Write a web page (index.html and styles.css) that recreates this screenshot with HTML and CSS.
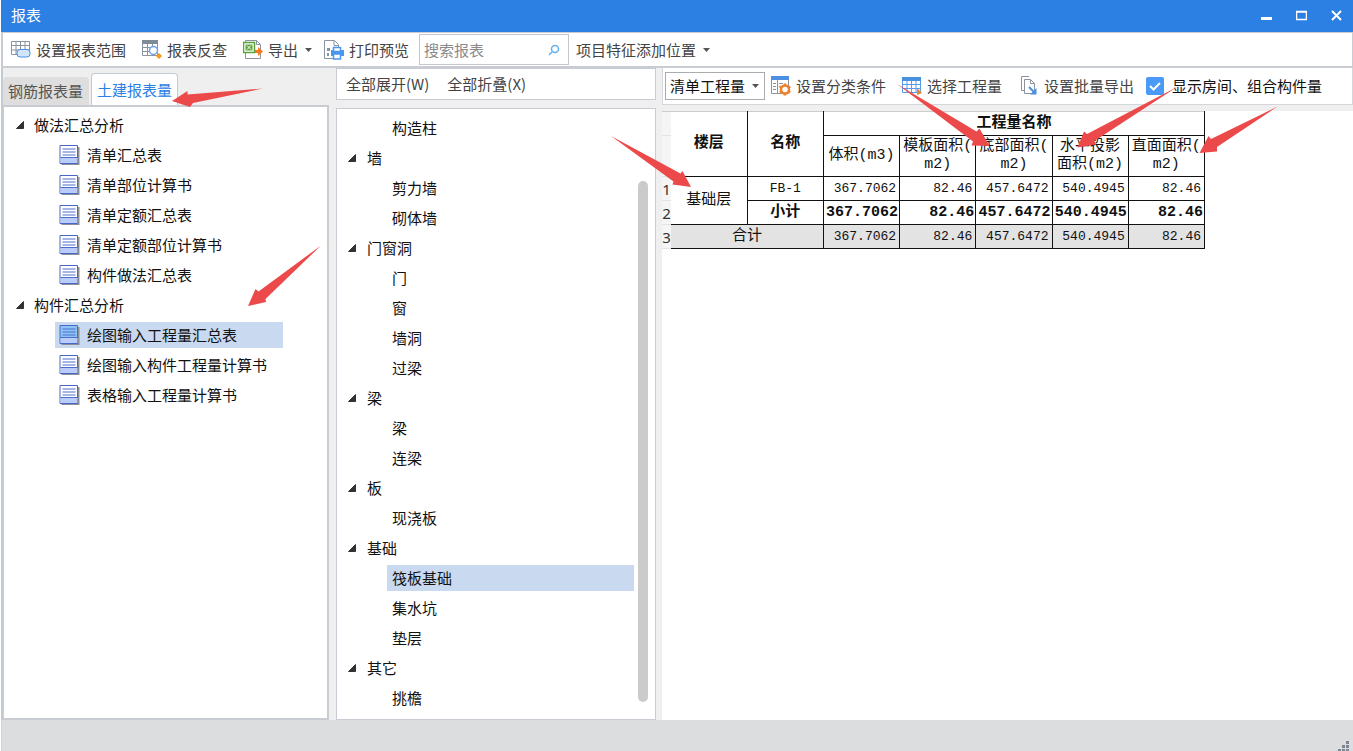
FILE: index.html
```html
<!DOCTYPE html>
<html lang="zh-CN">
<head>
<meta charset="utf-8">
<title>报表</title>
<link rel="stylesheet" href="styles.css">
</head>
<body>
<svg class="defs" aria-hidden="true">
  <symbol id="doc" viewBox="0 0 20 20">
    <path d="M2 2h18v18H2z" fill="#8a8f98"/>
    <path class="doc-page" d="M.5.5h17.500v18H.5z" stroke="#4768c8"/>
    <path class="doc-foot" d="M1 13h17v5H1z"/>
    <path d="M1 12.500h17M3 4h13M3 7h13M3 10h13" stroke="#4c6fce" fill="none"/>
  </symbol>
  <symbol id="tri" viewBox="0 0 8 8"><path d="M7.500 .5v7H.5z" fill="#333" stroke="#333"/></symbol>
  <symbol id="caret" viewBox="0 0 7 4"><path d="M0 0h7L3.500 4z" fill="#555"/></symbol>
</svg>
<div class="window">
  <header class="titlebar">
    <h1>报表</h1>
    <div class="winbtns">
      <button type="button" aria-label="最小化"><svg width="11" height="11"><path d="M0 8.500h11" stroke="#fff" stroke-width="3"/></svg></button>
      <button type="button" aria-label="最大化"><svg width="11" height="11"><path d="M.5 1.500h10v8H.5zM0 2h11" stroke="#fff" fill="none" stroke-width="1.500"/></svg></button>
      <button type="button" aria-label="关闭"><svg width="11" height="11"><path d="M1 1l9 9M10 1l-9 9" stroke="#fff" stroke-width="2"/></svg></button>
    </div>
  </header>

  <div class="toolbar">
    <button type="button" class="tool"><svg width="20" height="20" viewBox="0 0 20 20" fill="none"><path d="M.5 1.500h18v13H.5zM.5 5.500h18M.5 10h18M5 1v14M9.500 1v14M14 1v14" stroke="#8b949e"/><rect x="6" y="9.500" width="13" height="7.500" rx="3" fill="#cfe6fd" stroke="#4a90e2"/></svg>设置报表范围</button>
    <button type="button" class="tool"><svg width="20" height="20" viewBox="0 0 20 20" fill="none"><path d="M.5.5h15v15H.5zM.5 7.500h15M.5 11.500h15M5.500 3v12M10.500 3v12" stroke="#8b949e"/><path d="M0 0h16v4H0z" fill="#7f8a96"/><circle cx="11.500" cy="10.500" r="4" fill="#fff" stroke="#6fa0ee" stroke-width="1.500"/><path d="M17 13l3 3-3 3-3-3z" fill="#f59a1c"/></svg>报表反查</button>
    <button type="button" class="tool"><svg width="20" height="20" viewBox="0 0 20 20" fill="none"><path d="M2.500.5h11l4 4v14h-15zM13.500.5v4h4" fill="#fff" stroke="#8b949e"/><path d="M.5 2.500h11v10H.5z" fill="#fff" stroke="#5aa33a" stroke-width="1.500"/><path d="M2.500 4.500h7v6h-7z" fill="#5aa33a"/><path d="M4 5.500l4 4M8 5.500l-4 4" stroke="#fff"/><path d="M12 10h3V7l5 4.500-5 4.500v-3h-3z" fill="#f47a20"/></svg>导出<svg class="caret"><use href="#caret"/></svg></button>
    <button type="button" class="tool"><svg width="20" height="20" viewBox="0 0 20 20" fill="none"><path d="M.5.5h10l4 4v14H.5zM10 .5v5h5" fill="#fff" stroke="#8b949e"/><path d="M3 8h3v3H3zM3 13h2v3H3z" fill="#8b949e"/><path d="M7 10h13v6H7z" fill="#4a97ee"/><path d="M9.500 7.500h7v4h-7zM9.500 14h7v5h-7z" fill="#fff" stroke="#4a97ee" stroke-width="1.500"/></svg>打印预览</button>
    <label class="search">
      <input type="text" placeholder="搜索报表" aria-label="搜索报表">
      <svg width="12" height="12" viewBox="0 0 12 12" fill="none"><circle cx="7" cy="5" r="3.500" stroke="#62b0ee" stroke-width="1.500"/><path d="M4 8l-3 3" stroke="#62b0ee" stroke-width="1.500"/></svg>
    </label>
    <button type="button" class="tool">项目特征添加位置<svg class="caret"><use href="#caret"/></svg></button>
  </div>

  <main class="content">
    <section class="left">
      <div class="tabs" role="tablist">
        <button type="button" role="tab" class="tab">钢筋报表量</button>
        <button type="button" role="tab" class="tab active" aria-selected="true">土建报表量</button>
      </div>
      <div class="panel reports">
        <ul class="tree">
          <li class="group"><svg class="tri"><use href="#tri"/></svg>做法汇总分析</li>
          <li><button type="button" class="node"><svg class="doc"><use href="#doc"/></svg>清单汇总表</button></li>
          <li><button type="button" class="node"><svg class="doc"><use href="#doc"/></svg>清单部位计算书</button></li>
          <li><button type="button" class="node"><svg class="doc"><use href="#doc"/></svg>清单定额汇总表</button></li>
          <li><button type="button" class="node"><svg class="doc"><use href="#doc"/></svg>清单定额部位计算书</button></li>
          <li><button type="button" class="node"><svg class="doc"><use href="#doc"/></svg>构件做法汇总表</button></li>
          <li class="group"><svg class="tri"><use href="#tri"/></svg>构件汇总分析</li>
          <li><button type="button" class="node selected"><svg class="doc"><use href="#doc"/></svg>绘图输入工程量汇总表</button></li>
          <li><button type="button" class="node"><svg class="doc"><use href="#doc"/></svg>绘图输入构件工程量计算书</button></li>
          <li><button type="button" class="node"><svg class="doc"><use href="#doc"/></svg>表格输入工程量计算书</button></li>
        </ul>
      </div>
    </section>

    <section class="middle">
      <div class="panel actions">
        <button type="button">全部展开(W)</button>
        <button type="button">全部折叠(X)</button>
      </div>
      <div class="panel parts">
        <ul class="tree">
          <li><button type="button" class="node">构造柱</button></li>
          <li class="group"><svg class="tri"><use href="#tri"/></svg>墙</li>
          <li><button type="button" class="node">剪力墙</button></li>
          <li><button type="button" class="node">砌体墙</button></li>
          <li class="group"><svg class="tri"><use href="#tri"/></svg>门窗洞</li>
          <li><button type="button" class="node">门</button></li>
          <li><button type="button" class="node">窗</button></li>
          <li><button type="button" class="node">墙洞</button></li>
          <li><button type="button" class="node">过梁</button></li>
          <li class="group"><svg class="tri"><use href="#tri"/></svg>梁</li>
          <li><button type="button" class="node">梁</button></li>
          <li><button type="button" class="node">连梁</button></li>
          <li class="group"><svg class="tri"><use href="#tri"/></svg>板</li>
          <li><button type="button" class="node">现浇板</button></li>
          <li class="group"><svg class="tri"><use href="#tri"/></svg>基础</li>
          <li><button type="button" class="node selected">筏板基础</button></li>
          <li><button type="button" class="node">集水坑</button></li>
          <li><button type="button" class="node">垫层</button></li>
          <li class="group"><svg class="tri"><use href="#tri"/></svg>其它</li>
          <li><button type="button" class="node">挑檐</button></li>
        </ul>
        <div class="scroll"></div>
      </div>
    </section>

    <section class="right">
      <div class="options">
        <div class="select">
          <select aria-label="工程量类型"><option>清单工程量</option></select>
          <svg class="caret"><use href="#caret"/></svg>
        </div>
        <button type="button" class="tool"><svg width="20" height="20" viewBox="0 0 20 20" fill="none"><path d="M.5.5h17v17H.5z" fill="#fff" stroke="#8b949e"/><path d="M0 0h18v4H0z" fill="#4a8fe0"/><path d="M6.500 4v13M2 7.500h3M2 10.500h3M2 13.500h3M8 7.500h4M8 10.500h3" stroke="#8b949e"/><circle cx="14" cy="13.500" r="4" fill="#fff" stroke="#f0812b" stroke-width="2.500"/><path d="M14 7.500v2M14 17.500v2M8.800 10.500l1.700 1M17.500 15.500l1.700 1M8.800 16.500l1.700-1M17.500 11.500l1.700-1" stroke="#f0812b" stroke-width="2.500"/></svg>设置分类条件</button>
        <button type="button" class="tool"><svg width="20" height="20" viewBox="0 0 20 20" fill="none"><path d="M.5 1.500h18v15H.5zM.5 8.500h18M.5 12.500h18M5 5v12M9.500 5v12M14 5v12" stroke="#5c9be8"/><path d="M0 1h19v4H0z" fill="#4a8fe0"/><path d="M15 12l5 5-5 2z" fill="#f0812b"/></svg>选择工程量</button>
        <button type="button" class="tool"><svg width="20" height="20" viewBox="0 0 20 20" fill="none"><path d="M10 .5H2.500v14H5" stroke="#8b949e"/><path d="M5.500 3.500h6l4 4v10h-10zM11.500 3.500v4h4" fill="#fff" stroke="#8b949e"/><path d="M10 11l5 5" stroke="#4a8fe0" stroke-width="2"/><path d="M17.500 12v6.500H11z" fill="#4a8fe0"/></svg>设置批量导出</button>
        <label class="check"><input type="checkbox" checked><span class="box"><svg width="18" height="18" viewBox="0 0 18 18" fill="none"><path d="M4 9l3.500 3.500L14 6" stroke="#fff" stroke-width="2"/></svg></span>显示房间、组合构件量</label>
      </div>
      <div class="sheet">
        <table>
          <colgroup><col class="c-num"><col><col><col><col><col><col><col></colgroup>
          <tbody>
            <tr class="r-top"><td class="num"></td><th rowspan="2" class="edge">楼层</th><th rowspan="2">名称</th><th colspan="5">工程量名称</th></tr>
            <tr class="r-head"><td class="num"></td><td>体积(m3)</td><td>模板面积(<br>m2)</td><td>底部面积(<br>m2)</td><td>水平投影<br>面积(m2)</td><td>直面面积(<br>m2)</td></tr>
            <tr><td class="num">1</td><td rowspan="2" class="edge">基础层</td><td class="name">FB-1</td><td class="v">367.7062</td><td class="v">82.46</td><td class="v">457.6472</td><td class="v">540.4945</td><td class="v">82.46</td></tr>
            <tr class="sub"><td class="num">2</td><td>小计</td><td class="v">367.7062</td><td class="v">82.46</td><td class="v">457.6472</td><td class="v">540.4945</td><td class="v">82.46</td></tr>
            <tr class="total"><td class="num">3</td><td colspan="2" class="edge">合计</td><td class="v">367.7062</td><td class="v">82.46</td><td class="v">457.6472</td><td class="v">540.4945</td><td class="v">82.46</td></tr>
          </tbody>
        </table>
      </div>
    </section>
  </main>

  <footer class="status"><svg width="12" height="10"><path d="M8 0h3v3H8zM4 4h3v3H4zM8 4h3v3H8zM0 8h3v2H0zM4 8h3v2H4zM8 8h3v2H8z" fill="#7d8791"/></svg></footer>
</div>

<svg class="arrows" width="1353" height="320" aria-hidden="true">
  <path d="M172 101l15.500-10v3.500L263 88.500 193 103l-3 4z"/>
  <path d="M248 306l7.500-17 3 2.500L321 245.500 265.500 299l.5 3z"/>
  <path d="M691 187l-8.500-16-2 2.500L611 136l62.500 45.500-1 3z"/>
  <path d="M989.500 146l-10-17.500-3 3L897 84l76 57.500-1.500 4z"/>
  <path d="M1077.500 147.500l6.500-16 3 2.500 90-47-82.500 54 1.500 3.500z"/>
  <path d="M1199.500 153l9-17 2.500 3 66.500-32.500L1217 147v4.500z"/>
</svg>
</body>
</html>
```
FILE: styles.css
```css
* { box-sizing: border-box; }

body {
  margin: 0;
  background: #fff;
  color: #111;
  font: 15px/20px "Noto Sans CJK SC", "Noto Sans", sans-serif;
}

button, input, select {
  font: inherit;
  color: inherit;
  margin: 0;
  padding: 0;
  border: 0;
  background: none;
}

svg { flex: none; }
.defs { display: none; }
.caret { width: 7px; height: 4px; }
.tri { width: 8px; height: 8px; }

.window {
  display: flex;
  flex-direction: column;
  min-height: 100vh;
  margin-left: 1px;
  background: #efefef;
}

.titlebar {
  display: flex;
  align-items: center;
  justify-content: space-between;
  height: 32px;
  padding: 0 11px 2px 10px;
  background: #2c80e3;
  color: #fff;
}
.titlebar h1 { margin: 0; font-size: 15px; font-weight: 400; }
.winbtns { display: flex; gap: 24px; }
.winbtns button { display: flex; width: 11px; }

.toolbar {
  display: flex;
  align-items: center;
  height: 36px;
  padding: 0 0 0 8px;
  background: #fff;
  border: solid #c9cdd3;
  border-width: 1px 1px 2px 2px;
  color: #444;
}
.tool {
  display: flex;
  align-items: center;
  gap: 5px;
  margin-right: 16px;
  white-space: nowrap;
  color: #444;
}
.tool .caret { margin-left: 2px; }
.toolbar .tool:nth-child(3) { margin-right: 12px; }
.toolbar .tool:nth-child(4) { margin-right: 10px; }
.search {
  display: flex;
  align-items: center;
  width: 150px;
  height: 31px;
  margin-right: 7px;
  padding: 0 8px 0 4px;
  border: 1px solid #c4c8ce;
}
.search input { flex: 1; min-width: 0; outline: 0; }
.search input::placeholder { color: #8a8a8a; opacity: 1; }

.content {
  display: flex;
  flex: 1;
  border-left: 2px solid #c3cad2;
}
.panel { background: #fff; border: 2px solid #c9cdd3; }

.left { display: flex; flex-direction: column; width: 326px; }
.tabs { display: flex; align-items: flex-end; height: 37px; padding-top: 4px; }
.tab {
  height: 28px;
  padding: 0 6px 0 5px;
  background: #dedede;
  color: #555;
  border-radius: 4px 4px 0 0;
}
.tab.active {
  height: 32px;
  margin-left: 2px;
  padding: 0 5px;
  background: #fff;
  border: 1px solid #c3cad2;
  border-bottom: 0;
  border-radius: 4px 4px 0 0;
  color: #2c80e3;
}
.reports { flex: 1; padding: 3px 0; border-left-width: 1px; }

.tree { flex: 1; margin: 0; padding: 0; list-style: none; }
.tree li { display: flex; align-items: center; height: 30px; }
.tree .group { gap: 10px; padding-left: 12px; }
.node {
  display: flex;
  align-items: center;
  height: 26px;
  white-space: nowrap;
}
.selected { background: #c9d9f0; }
.reports .node { gap: 7px; margin-left: 51px; padding: 0 46px 0 4px; }
.doc { width: 21px; height: 20px; fill: #fff; }
.doc-page { fill: inherit; }
.doc-foot { fill: #b9ccfa; }
.selected .doc { fill: #8cc3f5; }

.middle { display: flex; flex-direction: column; width: 320px; margin-left: 7px; }
.actions {
  display: flex;
  align-items: center;
  gap: 18px;
  height: 32px;
  padding-left: 9px;
  border-width: 1px;
  color: #444;
}
.parts { display: flex; flex: 1; margin-top: 8px; padding: 4px 7px 5px 0; border-width: 1px; }
.parts .node { flex: 1; margin: 0 4px 0 50px; padding-left: 5px; }
.parts .group { gap: 11px; padding-left: 11px; }
.scroll { width: 10px; margin: 68px 0 12px; border-radius: 5px; background: #cbcbcb; }

.right { display: flex; flex: 1; flex-direction: column; margin-left: 6px; min-width: 0; }
.options {
  display: flex;
  align-items: center;
  height: 37px;
  padding-left: 2px;
  background: #fff;
  border: solid #d3d6db;
  border-width: 0 1px 1px;
}
.options .tool:nth-child(3) { margin-right: 17px; }
.options .tool:nth-child(4) { margin-right: 12px; }
.select {
  display: flex;
  align-items: center;
  width: 100px;
  height: 28px;
  margin-right: 6px;
  padding: 0 5px 0 4px;
  border: 1px solid #a9adb2;
}
.select select { flex: 1; min-width: 0; appearance: none; outline: 0; }
.check { display: flex; align-items: center; gap: 8px; white-space: nowrap; }
.check input { position: absolute; opacity: 0; }
.box { display: flex; width: 18px; height: 18px; border-radius: 2px; background: #4a9af8; }

.sheet { flex: 1; margin-top: 6px; background: #fff; }
table {
  width: 543px;
  table-layout: fixed;
  border-collapse: collapse;
  border-top: 1px solid #ccc;
  font: 15px/18px "Liberation Mono", "Noto Sans CJK SC", monospace;
  text-align: center;
}
.c-num { width: 9px; }
tr { height: 24px; }
.r-head { height: 41px; }
th, td { padding: 0; border: 1px solid #111; white-space: nowrap; }
.r-top th { border-top: 0; }
.edge { border-left: 0; }
td.num {
  border: 0;
  border-bottom: 1px solid #e4e4e4;
  background: #f5f5f5;
  font: 15px/18px "Noto Sans", sans-serif;
  color: #333;
}
.name { font-size: 13px; }
.v { padding-right: 3px; font-size: 13px; text-align: right; }
.sub { font-weight: 700; }
.sub .v { padding-right: 1px; font-size: 15px; }
.total td { background: #e3e3e3; }
.total td.num { background: #f5f5f5; }

.status {
  display: flex;
  align-items: flex-end;
  justify-content: flex-end;
  height: 31px;
  padding-right: 3px;
  background: #dcdddf;
  border-left: 1px solid #cdd1d8;
}

.arrows { position: absolute; top: 0; left: 0; fill: #ec4a4a; pointer-events: none; }
```
